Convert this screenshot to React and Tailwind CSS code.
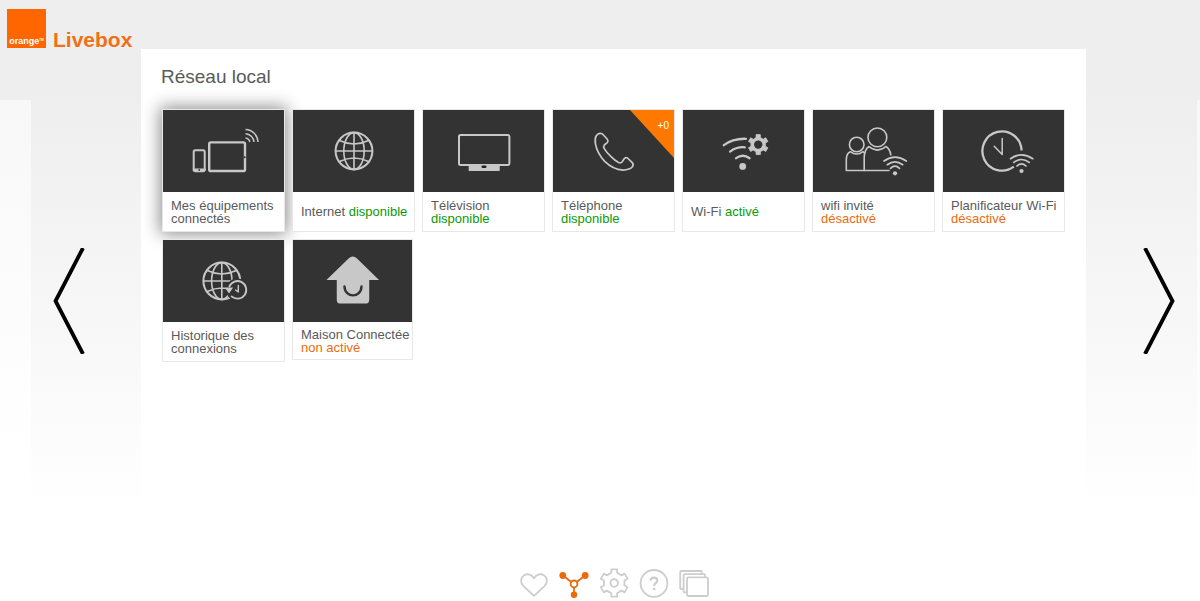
const GREEN = 'text-[#0a9a0a]';
const ORANGE = 'text-[#e96b10]';

// six-toothed gear outline centred on the origin
function gearPath(outer, inner, tip, root) {
  const points = [];
  for (let i = 0; i < 6; i++) {
    const mid = i * 60 - 90;
    [
      [inner, mid - root],
      [outer, mid - tip],
      [outer, mid + tip],
      [inner, mid + root],
    ].forEach(([r, deg]) => {
      const a = (deg * Math.PI) / 180;
      points.push(`${(r * Math.cos(a)).toFixed(2)} ${(r * Math.sin(a)).toFixed(2)}`);
    });
  }
  return `M${points.join('L')}Z`;
}

function TileArt({ children }) {
  return (
    <svg
      viewBox="0 0 121 82"
      width="121"
      height="82"
      className="block h-[82px] w-full bg-[#333]"
      fill="none"
      stroke="#c8c8c8"
      strokeWidth="2"
      strokeLinecap="round"
      strokeLinejoin="round"
      aria-hidden="true"
    >
      {children}
    </svg>
  );
}

// small wifi mark, origin at the centre of its dot
function MiniWifi({ x, y }) {
  return (
    <g transform={`translate(${x} ${y})`} strokeWidth="1.7">
      <path d="M-11-12.3Q0-20 11.3-12.3M-7.7-8.6Q0-14.4 7.7-8.6M-4.5-5Q0-9.4 4.5-5" />
      <circle r="2.1" fill="#c8c8c8" stroke="none" />
    </g>
  );
}

function DevicesArt() {
  return (
    <TileArt>
      <rect x="30.7" y="40.3" width="11" height="20.9" rx="1.6" />
      <path d="M31 59.7h10.5" strokeWidth="2.6" />
      <circle cx="36.2" cy="60" r="0.9" fill="#333" stroke="none" />
      <rect x="46.2" y="32.4" width="35.8" height="28.6" rx="1.6" strokeWidth="2.4" />
      <circle cx="81.7" cy="47.3" r="1" fill="#333" stroke="none" />
      <path d="M82.5 19.5A13 13 0 0 1 95 32M82.5 23.8A9 9 0 0 1 91 32M82.5 28A5 5 0 0 1 86.8 32" strokeWidth="1.5" strokeLinecap="butt" />
    </TileArt>
  );
}

function Globe({ cx }) {
  return (
    <g transform={`translate(${cx} 41)`} strokeWidth="1.6">
      <circle r="18.4" strokeWidth="2" />
      <ellipse rx="10.2" ry="18.4" />
      <path d="M0-18.4V18.4M-18.4 0H18.4M-14.5-10.5Q0-3.5 14.5-10.5M-14.5 10.5Q0 3.5 14.5 10.5" />
    </g>
  );
}

function InternetArt() {
  return (
    <TileArt>
      <Globe cx={61} />
    </TileArt>
  );
}

function TvArt() {
  return (
    <TileArt>
      <rect x="36" y="25" width="50.4" height="30" rx="1.5" />
      <path d="M45.7 55h31v6h-31z" fill="#c8c8c8" stroke="none" />
      <rect x="58.5" y="55.6" width="5" height="2.4" rx="1.2" fill="#222" stroke="none" />
    </TileArt>
  );
}

function PhoneArt() {
  return (
    <TileArt>
      <path
        d="M43.3 25.8Q45 23.4 47 23.3Q49 23.2 50.5 25L54.3 29.2Q55.7 31 54.3 32.7L51.3 35Q50 36.6 51.3 38.6Q53.8 43 58.3 46.8Q62 50.4 65.5 52.5Q67.8 53.4 69 52L71 49Q72.4 47 74.5 48L79 52.3Q81 54.5 79.4 56.8Q77 59.6 70 60.2Q60 59.5 51.7 51.4Q44 43 42.4 33.6Q41.6 28.4 43.3 25.8Z"
        strokeWidth="1.7"
      />
    </TileArt>
  );
}

function WifiSettingsArt() {
  return (
    <TileArt>
      <path d="M40.8 35.2Q50 28.3 63 28.8M47.1 41.6Q53.8 36.6 61.8 37.3M53.1 48.2Q59.7 43.2 66.6 48.2" strokeWidth="2.3" />
      <circle cx="59.7" cy="56.4" r="3.4" fill="#c8c8c8" stroke="none" />
      <g transform="translate(75.2 34.6)">
        <path d={gearPath(10.2, 7.4, 12, 17)} fill="#c8c8c8" strokeWidth="0.8" />
        <circle r="4.2" fill="#333" stroke="none" />
      </g>
    </TileArt>
  );
}

function GuestArt() {
  return (
    <TileArt>
      <g strokeWidth="1.6">
        <circle cx="43.7" cy="34.5" r="7.3" />
        <circle cx="64.4" cy="27.4" r="9.4" />
        <path d="M76 60.5H33.3V50Q33.3 43.2 37.3 41.7Q43.7 46.4 50 41.7L51.6 43" />
        <path d="M51.2 60.5V48Q51.2 39.4 56 36.5Q64.4 43.6 72.8 36.5Q77 39 77.8 44.8" />
      </g>
      <MiniWifi x={82} y={63.3} />
    </TileArt>
  );
}

function PlannerArt() {
  return (
    <TileArt>
      <path d="M78.6 40.5A19.6 19.6 0 1 0 70.8 56.7" strokeWidth="2.3" strokeLinecap="butt" />
      <path d="M59.2 28.5V44.5L51.2 36.3" strokeWidth="1.5" />
      <MiniWifi x={78.5} y={61} />
    </TileArt>
  );
}

function HistoryArt() {
  return (
    <TileArt>
      <Globe cx={58.8} />
      <circle cx="74.4" cy="49.8" r="11.3" fill="#333" stroke="none" />
      <path d="M66.3 46.6A8.8 8.8 0 1 1 68.6 56.4" strokeWidth="1.8" />
      <path d="M61.8 47.6H70.2L66 53.4Z" fill="#c8c8c8" stroke="none" />
      <path d="M75.3 45.5V52L72.6 50" strokeWidth="1.4" />
    </TileArt>
  );
}

function HouseArt() {
  return (
    <TileArt>
      <path
        d="M34 40L56.5 18Q60.8 14 65.1 18L87.5 40H77.5V60Q77.5 64 73.5 64H48.5Q44.5 64 44.5 60V40Z"
        fill="#c8c8c8"
        stroke="none"
      />
      <path d="M52.3 46.5C52.8 58.6 69.2 58.6 69.7 46.5" stroke="#333" strokeWidth="2.4" />
    </TileArt>
  );
}

const TILES = [
  { title: 'Mes équipements connectés', Art: DevicesArt, raised: true },
  { title: 'Internet', status: 'disponible', tone: GREEN, Art: InternetArt },
  { title: 'Télévision', status: 'disponible', tone: GREEN, Art: TvArt },
  { title: 'Téléphone', status: 'disponible', tone: GREEN, Art: PhoneArt, badge: '+0' },
  { title: 'Wi-Fi', status: 'activé', tone: GREEN, Art: WifiSettingsArt },
  { title: 'wifi invité', status: 'désactivé', tone: ORANGE, Art: GuestArt },
  { title: 'Planificateur Wi-Fi', status: 'désactivé', tone: ORANGE, Art: PlannerArt },
  { title: 'Historique des connexions', Art: HistoryArt },
  { title: 'Maison Connectée', status: 'non activé', tone: ORANGE, Art: HouseArt, compact: true },
];

function Tile({ tile }) {
  const { title, status, tone, Art, badge, raised, compact } = tile;
  return (
    <a
      href="#"
      className={`relative block border border-[#e8e8e8] bg-white ${compact ? 'w-[121px]' : 'w-[123px]'} ${
        raised ? 'shadow-[0_0_16px_2px_rgba(0,0,0,0.45)]' : ''
      }`}
    >
      <Art />
      {badge && (
        <span className="absolute right-0 top-0 h-12 w-11 bg-[#ff7900] pr-[5px] pt-2 text-right text-[10px] leading-4 text-white [clip-path:polygon(0_0,100%_0,100%_100%)]">
          {badge}
        </span>
      )}
      <span className={`flex items-center pl-2 text-[13px] leading-[13px] text-[#5a5a5a] ${compact ? 'h-[37px]' : 'h-[39px] pr-1'}`}>
        <span>
          {title} {status && <span className={tone}>{status}</span>}
        </span>
      </span>
    </a>
  );
}

function NavIcon({ children, active }) {
  return (
    <svg
      viewBox="0 0 30 30"
      className="block size-[30px]"
      fill="none"
      stroke={active ? '#ea6a0c' : '#cdcdcd'}
      strokeWidth="1.8"
      strokeLinejoin="round"
      aria-hidden="true"
    >
      {children}
    </svg>
  );
}

function BottomNav() {
  return (
    <nav className="flex h-12 items-start justify-center gap-2.5 pt-[15px]">
      <button type="button" aria-label="Favoris">
        <NavIcon>
          <path d="M15 27.8L4.5 18.2C.8 14.4 1.6 9.4 5.1 7.2C8.8 5.2 13 6.4 15 10.4C17 6.4 21.2 5.2 24.9 7.2C28.4 9.4 29.2 14.4 25.5 18.2Z" />
        </NavIcon>
      </button>
      <button type="button" aria-label="Réseau" aria-current="page">
        <NavIcon active>
          <path d="M4 7.5L12 13.7M26 7.5L18 13.7M15 19V27" />
          <circle cx="15" cy="15.9" r="3.4" />
          <g fill="#ea6a0c" stroke="none">
            <circle cx="3.8" cy="7.5" r="3.4" />
            <circle cx="26.2" cy="7.5" r="3.4" />
            <circle cx="15" cy="26.8" r="3.2" />
          </g>
        </NavIcon>
      </button>
      <button type="button" aria-label="Paramètres">
        <NavIcon>
          <g transform="translate(15.2 15)">
            <path d={gearPath(14, 10.6, 12, 16)} />
            <circle r="3.8" />
          </g>
        </NavIcon>
      </button>
      <button type="button" aria-label="Aide">
        <NavIcon>
          <circle cx="15" cy="15.4" r="13.4" />
          <path d="M11.6 12.6Q11.8 9.6 15 9.6Q18.4 9.8 18.3 12.6Q18.2 14.2 16.4 15.3Q15.1 16.2 15.1 18" strokeWidth="2.2" />
          <path d="M15.1 19.8V22.2" strokeWidth="2.4" />
        </NavIcon>
      </button>
      <button type="button" aria-label="Applications">
        <NavIcon>
          <rect x="8" y="9.4" width="21" height="18.6" rx="1.5" />
          <path d="M4.6 24.4V7.6Q4.6 6.2 6 6.2H26M1.2 21V4.2Q1.2 3 2.6 3H22.6V6.2M26 6.2V9.4M1.2 21H4.6M4.6 24.4H8" />
        </NavIcon>
      </button>
    </nav>
  );
}

function Chevron({ points }) {
  return (
    <svg viewBox="0 0 32 106" className="block h-[106px] w-8" fill="none" stroke="#000" strokeWidth="3.8" aria-hidden="true">
      <polyline points={points} />
    </svg>
  );
}

export default function App() {
  return (
    <div className="flex min-h-screen flex-col bg-linear-to-b from-[#eeeeee] from-15% to-white to-85% font-['Liberation_Sans',Arial,sans-serif]">
      <header className="flex h-[49px] items-end gap-[7px] pb-px pl-[7px]">
        <span className="flex size-[39px] items-end justify-center bg-[#ff6600] pb-[2px] text-[9px] font-bold leading-[10px] text-white">
          orange
          <span className="pb-1 text-[3px] leading-[3px]">TM</span>
        </span>
        <span className="text-[21px] font-bold leading-4 text-[#f07018]">Livebox</span>
      </header>

      <div className="flex flex-1">
        <div className="flex w-[141px] shrink-0">
          <div className="mt-[51px] w-[31px] bg-linear-to-b from-[#f8f8f8] to-white to-70%" />
          <button type="button" aria-label="Page précédente" className="flex flex-1 items-center pb-12 pl-[22px]">
            <Chevron points="30,0 2.5,53 30,106" />
          </button>
        </div>

        <div className="flex min-w-0 flex-1 flex-col">
          <main className="flex-1 bg-white pb-5">
            <h1 className="px-5 pt-4 text-[19px] leading-6 text-[#5a5a5a]">Réseau local</h1>
            <div className="mt-5 flex flex-wrap items-start gap-[7px] pl-[21px] pr-4">
              {TILES.map((tile) => (
                <Tile key={tile.title} tile={tile} />
              ))}
            </div>
          </main>
          <BottomNav />
        </div>

        <div className="flex w-[114px] shrink-0">
          <button type="button" aria-label="Page suivante" className="flex flex-1 items-center justify-end pb-12 pr-[22px]">
            <Chevron points="2,0 29.5,53 2,106" />
          </button>
          <div className="mt-[51px] w-[3px] bg-linear-to-b from-[#f8f8f8] to-white to-70%" />
        </div>
      </div>
    </div>
  );
}
